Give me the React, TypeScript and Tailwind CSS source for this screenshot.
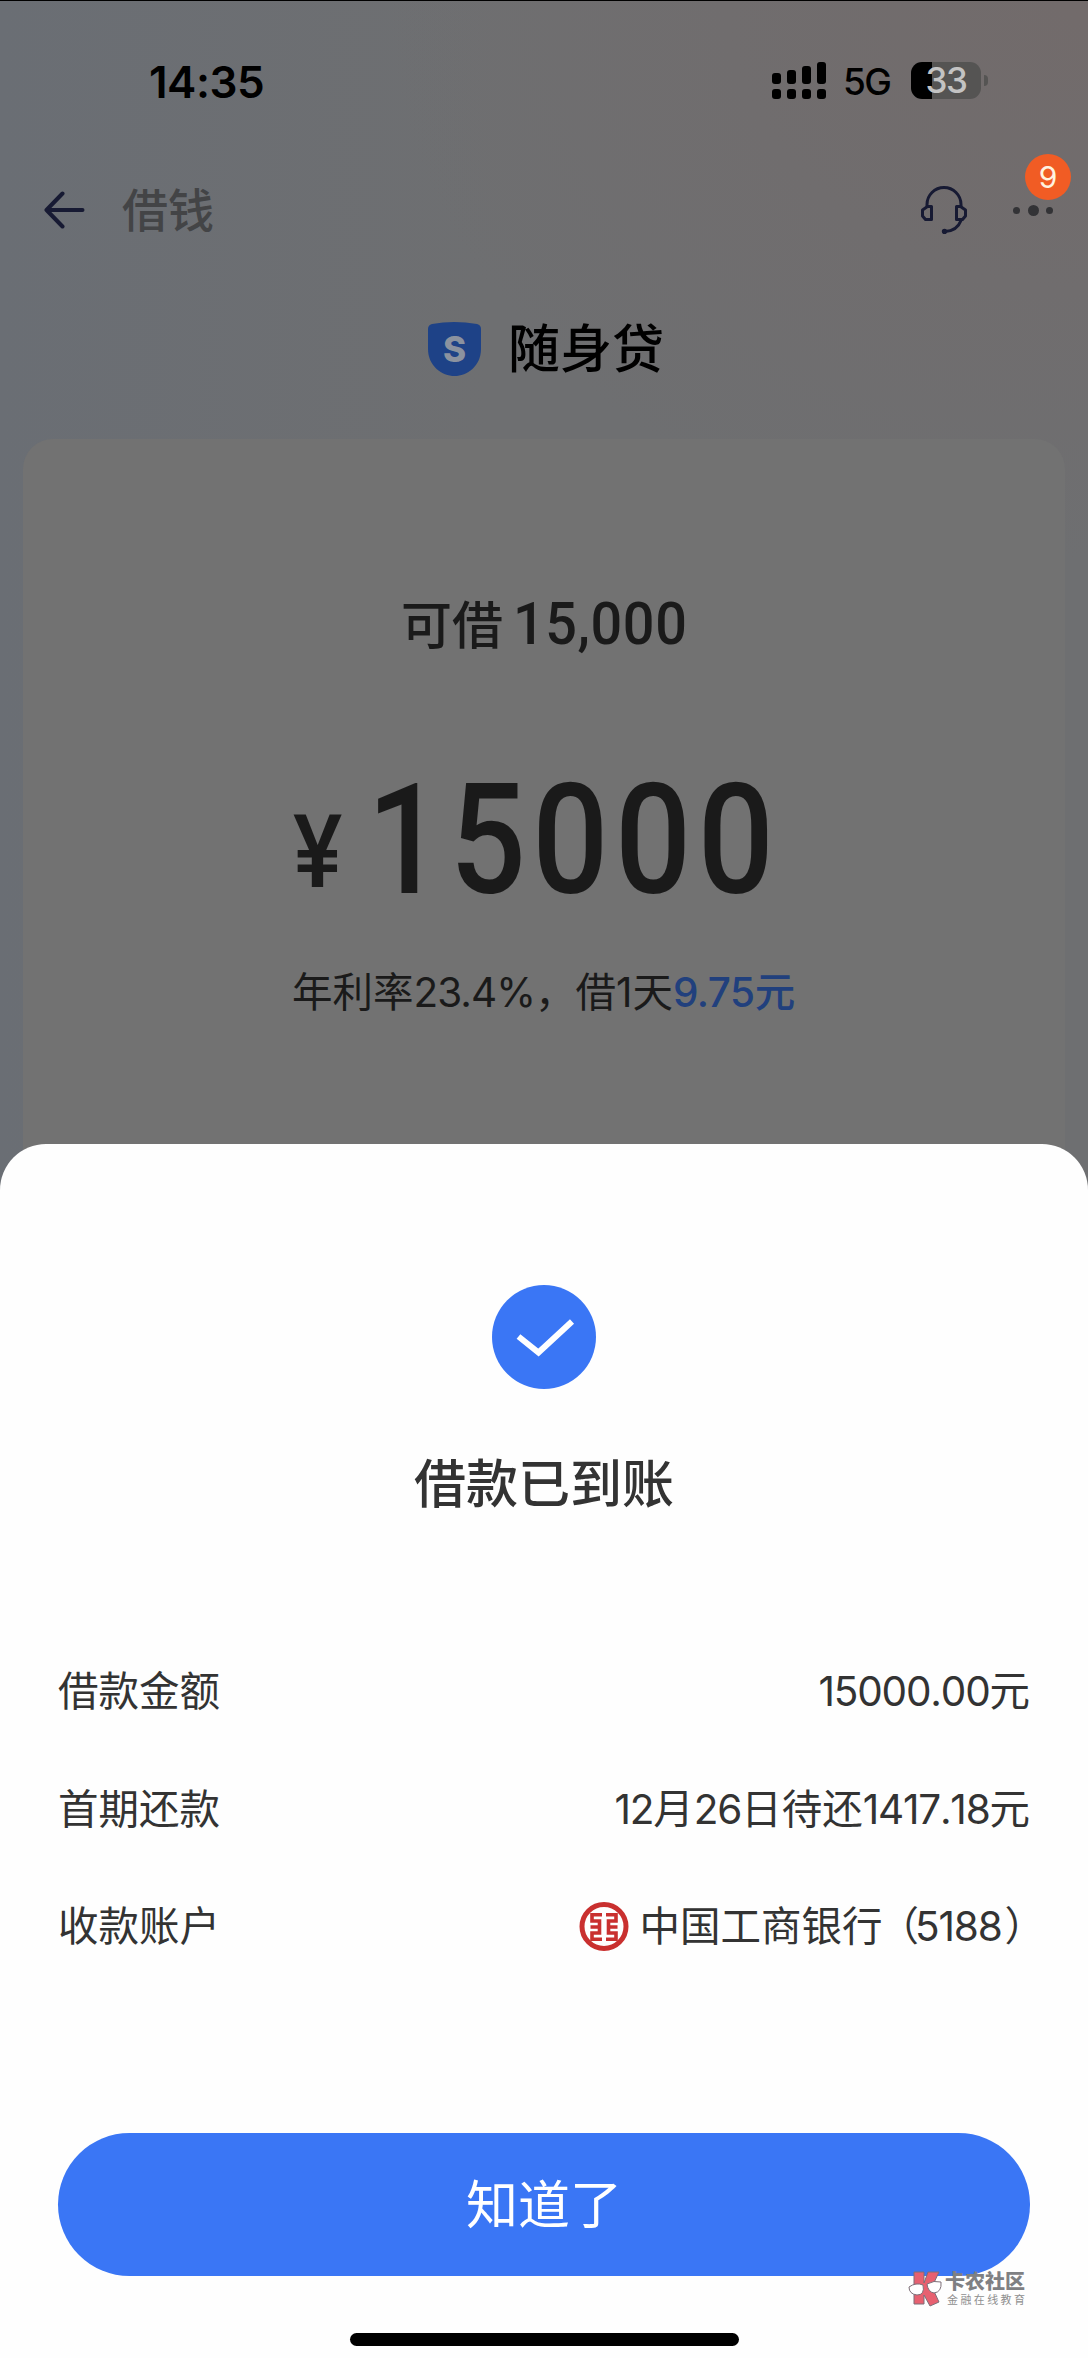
import type { ReactNode } from "react";

const CJK = "font-['Inter','Noto_Sans_CJK_SC',sans-serif]";

function StatusBar() {
  return (
    <div className="flex h-[162px] items-start pl-[149px] pr-[100px]">
      <div className="mt-[55px] text-[44px] font-semibold leading-[53px] tracking-[-0.5px] text-black">14:35</div>
      <div className="ml-auto mt-[61px] flex h-[37px] items-center">
        <svg width="54" height="37" viewBox="0 0 54 37">
          {[
            [0, 11],
            [15, 8],
            [30, 4],
            [45, 0],
          ].map(([x, y]) => (
            <g key={x}>
              <rect x={x} y={y} width="9" height={22 - y} rx="3" />
              <rect x={x} y="27" width="9" height="10" rx="3" />
            </g>
          ))}
        </svg>
        <span className="ml-[17px] w-[49px] pt-[2px] text-[37px] font-medium leading-[37px] tracking-[-1.5px] text-black">5G</span>
        <div className="ml-[19px] flex h-[37px] w-[70px] items-center justify-center rounded-[11px] bg-[linear-gradient(90deg,#000_21px,#555453_21px)]">
          <span className="text-[35px] font-medium leading-[37px] tracking-[-1.5px] text-[#c3c3c3]">33</span>
        </div>
        <div className="ml-[3px] h-[11px] w-[4px] rounded-r-full bg-[#555453]" />
      </div>
    </div>
  );
}

function NavBar() {
  return (
    <div className="flex h-[94px] items-center pl-[44px] pr-[35px]">
      <svg width="41" height="40" viewBox="0 0 41 40" fill="none" stroke="#171a33" strokeWidth="4" strokeLinecap="round" strokeLinejoin="round">
        <path d="M18.500 3.500L2.500 20L18.500 36.500M2.500 20H38.500" />
      </svg>
      <span className="ml-[37px] text-[46px] font-medium leading-[60px] text-[#434446]">借钱</span>
      <svg className="ml-auto" width="48" height="48" viewBox="0 0 48 48" fill="none" stroke="#171a33" strokeWidth="3" strokeLinecap="round">
        <path d="M7 20V18.500a17 17 0 0 1 34 0V20" />
        <path d="M11.500 20.500H7.500L2.500 24V30L5.500 33.500H11.500Z" strokeLinejoin="round" />
        <path d="M36.500 20.500H40.500L45.500 24V30L42.500 33.500H36.500Z" strokeLinejoin="round" />
        <path d="M41 34.500Q37 45 25 45.500" />
        <circle cx="24.500" cy="45.500" r="1.200" fill="#171a33" />
      </svg>
      <div className="relative ml-[45px] flex h-[12px] w-[40px] items-center justify-between">
        <i className="size-[7px] rounded-full bg-[#333336]" />
        <i className="size-[11px] rounded-full bg-[#333336]" />
        <i className="size-[7px] rounded-full bg-[#333336]" />
        <span className="absolute -top-[50px] left-[12px] flex size-[46px] items-center justify-center rounded-full bg-[#f15c24] text-[30px] leading-none text-[#fff3e0]">9</span>
      </div>
    </div>
  );
}

function Brand() {
  return (
    <div className="mt-[57px] flex h-[70px] items-center pl-[428px]">
      <svg width="53" height="54" viewBox="0 0 53 54">
        <path d="M4 2Q26 -2 49 2Q53 3 53 7V27C53 44 39 54 26.500 54S0 44 0 27V7Q0 3 4 2Z" fill="#1e4287" />
        <text x="26.500" y="40" textAnchor="middle" fontSize="35" fontWeight="800" fill="#8b929f" fontFamily="Inter">S</text>
      </svg>
      <span className="ml-[27px] pt-[2px] text-[52px] font-medium leading-[70px] text-black">随身贷</span>
    </div>
  );
}

function QuotaCard() {
  return (
    <div className="mx-[23px] mt-[55px] h-[740px] rounded-t-[30px] bg-[#727272] text-[#1a1a1a]">
      <div className="flex items-baseline pl-[378px] pt-[147px]">
        <span className="text-[51px] font-medium leading-[76px]">可借</span>
        <span className="ml-[10px] inline-block origin-left scale-x-[.93] font-['Roboto'] text-[60px] font-medium leading-[76px] tracking-[0.6px]">15,000</span>
      </div>
      <div className="mt-[77px] flex h-[200px] items-baseline pl-[270px] font-['Roboto'] font-medium leading-[200px]">
        <span className="relative -top-[6px] inline-block w-[74px] origin-left scale-x-[.91] text-[102px]">¥</span>
        <span className="inline-block origin-left scale-x-[.87] text-[154px] tracking-[7.5px]">15000</span>
      </div>
      <div className="mt-[22px] flex items-baseline pl-[269px] text-[40.500px] leading-[60px]">
        <span>年利率</span>
        <span className="tracking-[-1px]">23.4%</span>
        <span>，借1天</span>
        <span className="font-medium tracking-[-0.5px] text-[#21407d]">9.75元</span>
      </div>
    </div>
  );
}

function BankLogo() {
  return (
    <svg className="relative -top-[1px] -left-[1px]" width="50" height="51" viewBox="0 0 50 51" fill="none" stroke="#c9302f">
      <circle cx="25" cy="25.500" r="22" strokeWidth="5" />
      <g strokeWidth="3.600">
        <path d="M23 13.700H13V20H20.500V32H13V38.300H23M11.500 26H20.500" />
        <path d="M27 13.700H37V20H29.500V32H37V38.300H27M38.500 26H29.500" />
      </g>
    </svg>
  );
}

function Row({ label, children }: { label: string; children: ReactNode }) {
  return (
    <div className="flex h-[60px] items-center justify-between text-[40.500px] leading-[60px]">
      <span>{label}</span>
      <span className="flex items-center">{children}</span>
    </div>
  );
}

function Num({ children }: { children: string }) {
  return <span className="tracking-[-1.200px] [font-kerning:none]">{children}</span>;
}

function Watermark() {
  return (
    <div className="absolute left-[908px] top-[2270px] flex">
      <svg width="35" height="36" viewBox="0 0 35 36" stroke="#7d6f78" strokeWidth="1">
        <path d="M6 1H16V12L20 1H31L24 16L31 31L22 35L16 24V33H6Z" fill="#e76070" />
        <path d="M1 16Q8 11 15 14Q17 24 9 24Q1 23 1 16Z" fill="#fff" />
        <path d="M19 13Q26 9 33 11Q34 21 26 22Q20 21 19 13Z" fill="#fff" />
      </svg>
      <div className="ml-[2px] flex flex-col whitespace-nowrap">
        <span className="text-[20px] font-black leading-[22px] text-[#7f8083]">卡农社区</span>
        <span className="ml-[2px] text-[11px] leading-[14px] tracking-[2.400px] text-[#8f8f8f]">金融在线教育</span>
      </div>
    </div>
  );
}

export default function App() {
  return (
    <div className={`relative h-[2358px] w-[1088px] overflow-hidden border-t border-black bg-[#6e6f71] ${CJK}`}>
      <div className="h-[1200px] bg-[radial-gradient(ellipse_700px_560px_at_100%_0%,#746968b0,#6f6d6d00),linear-gradient(90deg,#6a6e74_0%,#6e6f71_45%,#6e6f71_100%)]">
        <StatusBar />
        <NavBar />
        <Brand />
        <QuotaCard />
      </div>
      <div className="absolute left-0 top-[1143px] flex h-[1215px] w-[1088px] flex-col rounded-t-[46px] bg-[#fefefe] px-[58px] text-[#333]">
        <svg className="mx-auto mt-[141px]" width="104" height="104" viewBox="0 0 104 104">
          <circle cx="52" cy="52" r="52" fill="#3a76f5" />
          <path d="M26.500 51.500L46.500 67.500L80 36.500" fill="none" stroke="#fff" strokeWidth="6" />
        </svg>
        <h1 className="mt-[58px] text-center text-[52px] font-medium leading-[76px]">借款已到账</h1>
        <div className="mt-[139px] flex flex-col gap-[57.500px]">
          <Row label="借款金额"><Num>15000.00</Num>元</Row>
          <Row label="首期还款"><Num>12</Num>月<Num>26</Num>日待还<Num>1417.18</Num>元</Row>
          <Row label="收款账户">
            <BankLogo />
            <span className="ml-[10px]">中国工商银行</span>
            <span className="-ml-[4px] -mr-[4px]">（</span>
            <Num>5188</Num>
            <span className="-mr-[15px] ml-[3px]">）</span>
          </Row>
        </div>
        <button className="mt-[176px] h-[143px] rounded-full bg-[#3a76f5] text-[52px] leading-[76px] text-white">
          <span className="relative top-px">知道了</span>
        </button>
        <div className="mx-auto mt-[57px] h-[13px] w-[389px] rounded-full bg-black" />
      </div>
      <Watermark />
    </div>
  );
}
